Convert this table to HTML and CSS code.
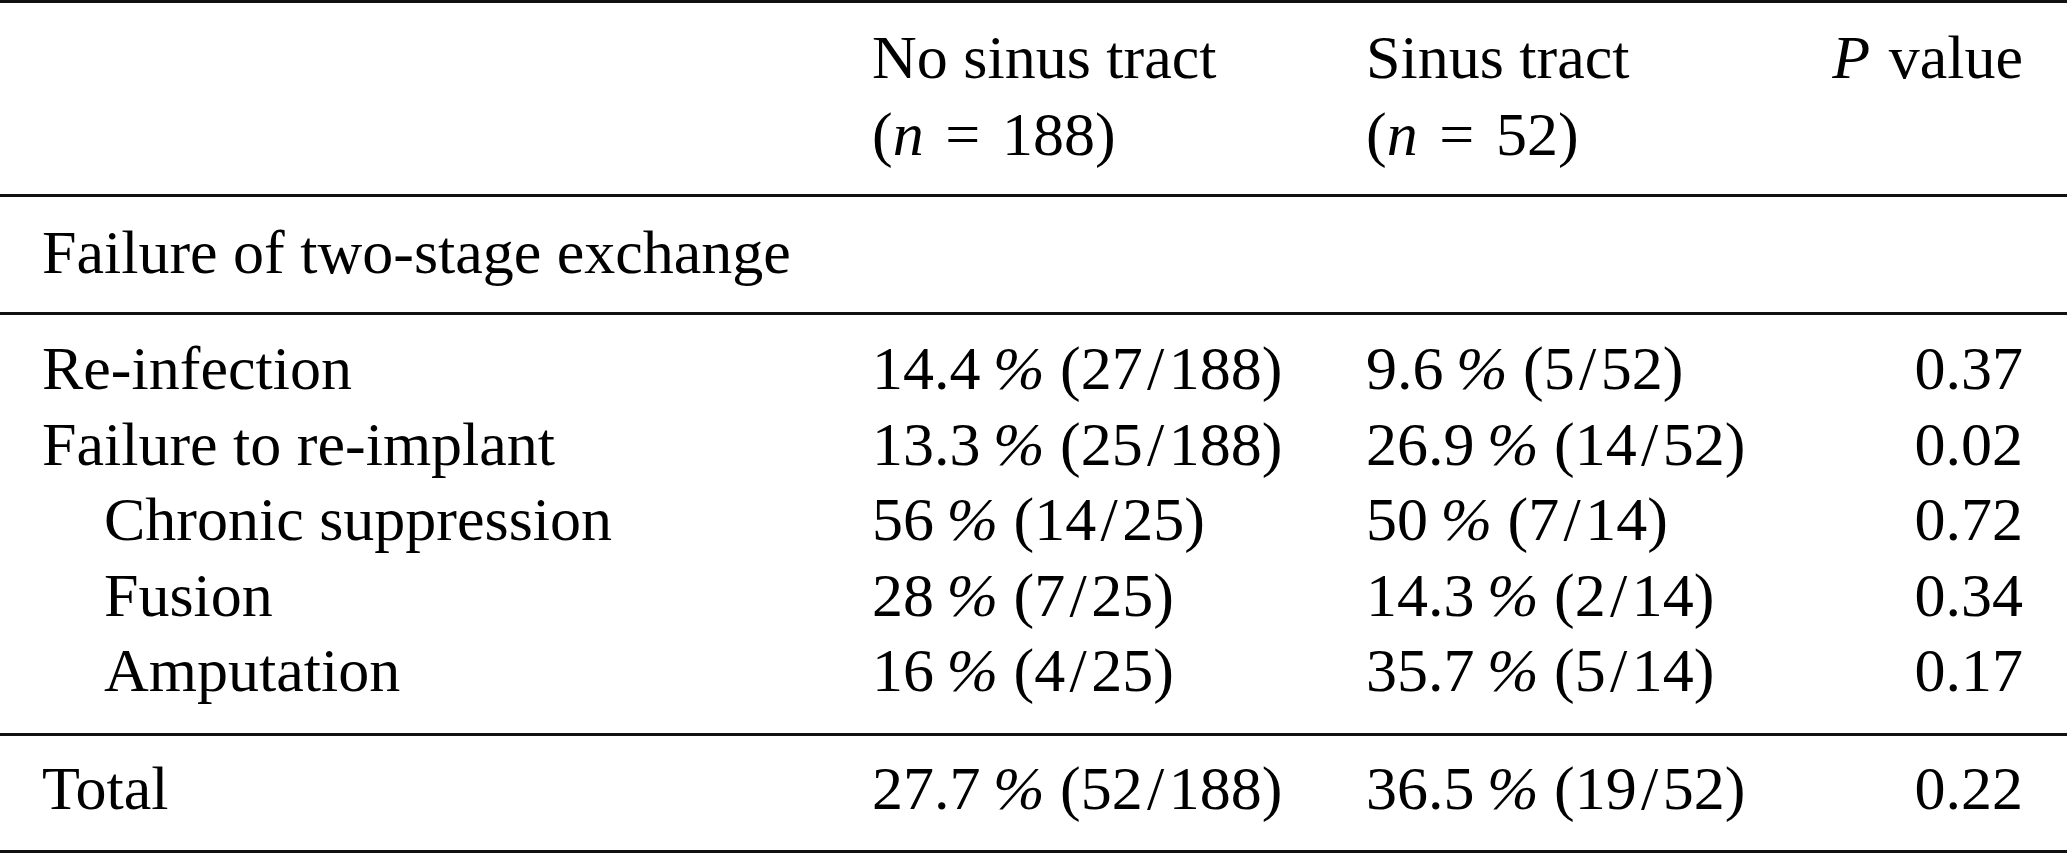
FILE: index.html
```html
<!DOCTYPE html>
<html lang="en">
<head>
<meta charset="utf-8">
<title>Failure of two-stage exchange</title>
<link rel="stylesheet" href="styles.css">
</head>
<body>
<table class="results">
  <colgroup>
    <col class="c-label">
    <col class="c-no">
    <col class="c-yes">
    <col class="c-p">
  </colgroup>
  <thead>
    <tr>
      <th class="label"></th>
      <th class="val">No sinus tract<br>(<i>n</i><span class="rel">=</span>188)</th>
      <th class="val">Sinus tract<br>(<i>n</i><span class="rel">=</span>52)</th>
      <th class="pval"><i>P</i><span class="sp"></span>value</th>
    </tr>
  </thead>
  <tbody class="group">
    <tr>
      <td class="label">Failure of two-stage exchange</td>
      <td></td><td></td><td></td>
    </tr>
  </tbody>
  <tbody class="rows">
    <tr class="first">
      <td class="label">Re-infection</td>
      <td class="val">14.4&#8201;<span class="pct">%</span> (27<span class="sl">/</span>188)</td>
      <td class="val">9.6&#8201;<span class="pct">%</span> (5<span class="sl">/</span>52)</td>
      <td class="pval">0.37</td>
    </tr>
    <tr>
      <td class="label">Failure to re-implant</td>
      <td class="val">13.3&#8201;<span class="pct">%</span> (25<span class="sl">/</span>188)</td>
      <td class="val">26.9&#8201;<span class="pct">%</span> (14<span class="sl">/</span>52)</td>
      <td class="pval">0.02</td>
    </tr>
    <tr>
      <td class="label sub">Chronic suppression</td>
      <td class="val">56&#8201;<span class="pct">%</span> (14<span class="sl">/</span>25)</td>
      <td class="val">50&#8201;<span class="pct">%</span> (7<span class="sl">/</span>14)</td>
      <td class="pval">0.72</td>
    </tr>
    <tr>
      <td class="label sub">Fusion</td>
      <td class="val">28&#8201;<span class="pct">%</span> (7<span class="sl">/</span>25)</td>
      <td class="val">14.3&#8201;<span class="pct">%</span> (2<span class="sl">/</span>14)</td>
      <td class="pval">0.34</td>
    </tr>
    <tr class="last">
      <td class="label sub">Amputation</td>
      <td class="val">16&#8201;<span class="pct">%</span> (4<span class="sl">/</span>25)</td>
      <td class="val">35.7&#8201;<span class="pct">%</span> (5<span class="sl">/</span>14)</td>
      <td class="pval">0.17</td>
    </tr>
  </tbody>
  <tbody class="total">
    <tr>
      <td class="label">Total</td>
      <td class="val">27.7&#8201;<span class="pct">%</span> (52<span class="sl">/</span>188)</td>
      <td class="val">36.5&#8201;<span class="pct">%</span> (19<span class="sl">/</span>52)</td>
      <td class="pval">0.22</td>
    </tr>
  </tbody>
</table>
</body>
</html>
```
FILE: styles.css
```css
html, body {
  margin: 0;
  padding: 0;
  background: #ffffff;
}

body {
  font-family: "Liberation Serif", "Times New Roman", serif;
  font-size: 62px;
  color: #000000;
}

.results {
  width: 2067px;
  border-collapse: collapse;
  table-layout: fixed;
  border-top: 3px solid #111111;
  border-bottom: 3px solid #111111;
}

.c-label { width: 872px; }
.c-no { width: 494px; }
.c-yes { width: 414px; }
.c-p { width: 287px; }

.results th,
.results td {
  padding: 0;
  font-weight: normal;
  text-align: left;
  vertical-align: top;
  white-space: nowrap;
}

.results thead th {
  line-height: 77px;
  padding-top: 16px;
  padding-bottom: 21px;
}

.results .label {
  padding-left: 42px;
}

.results .label.sub {
  padding-left: 104px;
}

.results .pval {
  text-align: right;
  padding-right: 44px;
}

.rel {
  padding: 0 0.35em;
}

.sp {
  display: inline-block;
  width: 0.3em;
}

.pct {
  font-style: italic;
}

.sl {
  padding: 0 0.07em;
}

.group td {
  border-top: 3px solid #111111;
  line-height: 75px;
  padding-top: 18px;
  padding-bottom: 22px;
}

.rows td {
  line-height: 75.5px;
}

.rows .first td {
  border-top: 3px solid #111111;
  padding-top: 16px;
}

.rows .last td {
  padding-bottom: 24px;
}

.total td {
  border-top: 3px solid #111111;
  line-height: 75px;
  padding-top: 15px;
  padding-bottom: 24px;
}
```
